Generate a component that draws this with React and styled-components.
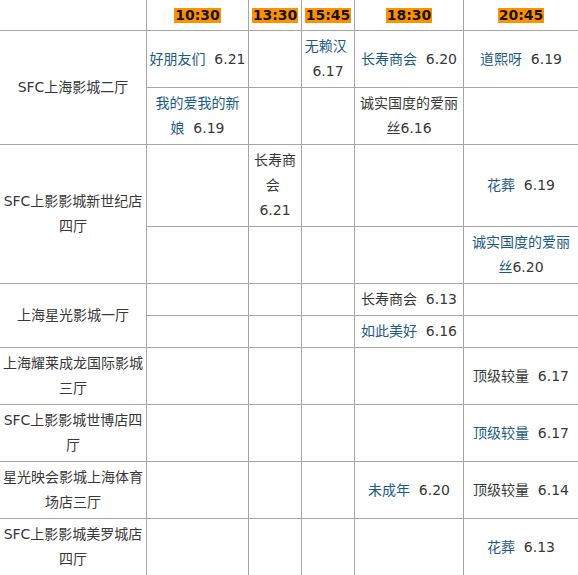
import styled, { createGlobalStyle } from "styled-components"

const GlobalStyle = createGlobalStyle`
	html, body {
		margin: 0;
		padding: 0;
		background: #fff;
	}
	body {
		font-family: "DejaVu Sans", "Noto Sans CJK SC", sans-serif;
	}
`

const times = ["10:30", "13:30", "15:45", "18:30", "20:45"]

const rows = [
	{
		hall: "SFC上海影城二厅",
		slots: [
			[
				{ name: "好朋友们", date: "6.21", link: true },
				null,
				{ name: "无赖汉", date: "6.17", link: true },
				{ name: "长寿商会", date: "6.20", link: true },
				{ name: "道熙呀", date: "6.19", link: true },
			],
			[
				{ name: "我的爱我的新娘", date: "6.19", link: true },
				null,
				null,
				{ name: "诚实国度的爱丽丝", date: "6.16", tight: true },
				null,
			],
		],
	},
	{
		hall: "SFC上影影城新世纪店四厅",
		slots: [
			[null, { name: "长寿商会", date: "6.21" }, null, null, { name: "花葬", date: "6.19", link: true }],
			[null, null, null, null, { name: "诚实国度的爱丽丝", date: "6.20", link: true, tight: true }],
		],
	},
	{
		hall: "上海星光影城一厅",
		slots: [
			[null, null, null, { name: "长寿商会", date: "6.13" }, null],
			[null, null, null, { name: "如此美好", date: "6.16", link: true }, null],
		],
	},
	{
		hall: "上海耀莱成龙国际影城三厅",
		slots: [[null, null, null, null, { name: "顶级较量", date: "6.17" }]],
	},
	{
		hall: "SFC上影影城世博店四厅",
		slots: [[null, null, null, null, { name: "顶级较量", date: "6.17", link: true }]],
	},
	{
		hall: "星光映会影城上海体育场店三厅",
		slots: [[null, null, null, { name: "未成年", date: "6.20", link: true }, { name: "顶级较量", date: "6.14" }]],
	},
	{
		hall: "SFC上影影城美罗城店四厅",
		slots: [[null, null, null, null, { name: "花葬", date: "6.13", link: true }]],
	},
]

const Schedule = styled.div`
	display: grid;
	grid-template-columns: 146px 101px 52px 52px 108px 1fr;
	grid-template-rows: 30px;
	grid-auto-rows: auto;
	gap: 1px;
	background: #a8a6a2;
	width: 578px;
	overflow: hidden;
`

const Cell = styled.div`
	background: #fff;
	display: flex;
	align-items: center;
	justify-content: center;
	padding: 3px 2px;
	min-height: 25px;
	font-size: 14px;
	line-height: 25px;
	color: #383838;
	text-align: center;
	grid-row: ${({ span }) => (span ? `span ${span}` : "auto")};
`

const HeadCell = styled(Cell)`
	padding: 0 2px;
	min-height: 0;
`

const Time = styled.span`
	display: inline-block;
	background: #ff9100;
	color: #151515;
	font-weight: bold;
	font-size: 14px;
	line-height: 15px;
	padding: 0 1px;
`

const Content = styled.div`
	min-width: 0;
`

const Film = styled.span`
	color: ${({ link }) => (link ? "#1d5a86" : "inherit")};
	cursor: ${({ link }) => (link ? "pointer" : "default")};
`

function Show({ show }) {
	if (!show) return null
	return (
		<Content>
			<Film link={show.link ? 1 : 0}>{show.name}</Film>
			{show.tight ? "" : "\u00a0 "}
			{show.date}
		</Content>
	)
}

export default function App() {
	return (
		<>
			<GlobalStyle />
			<Schedule>
				<HeadCell />
				{times.map(t => (
					<HeadCell key={t}>
						<Time>{t}</Time>
					</HeadCell>
				))}
				{rows.map(row => (
					<Row key={row.hall} row={row} />
				))}
			</Schedule>
		</>
	)
}

function Row({ row }) {
	return (
		<>
			<Cell span={row.slots.length}>
				<Content>{row.hall}</Content>
			</Cell>
			{row.slots.map((line, i) =>
				line.map((show, j) => (
					<Cell key={`${i}-${j}`}>
						<Show show={show} />
					</Cell>
				))
			)}
		</>
	)
}
